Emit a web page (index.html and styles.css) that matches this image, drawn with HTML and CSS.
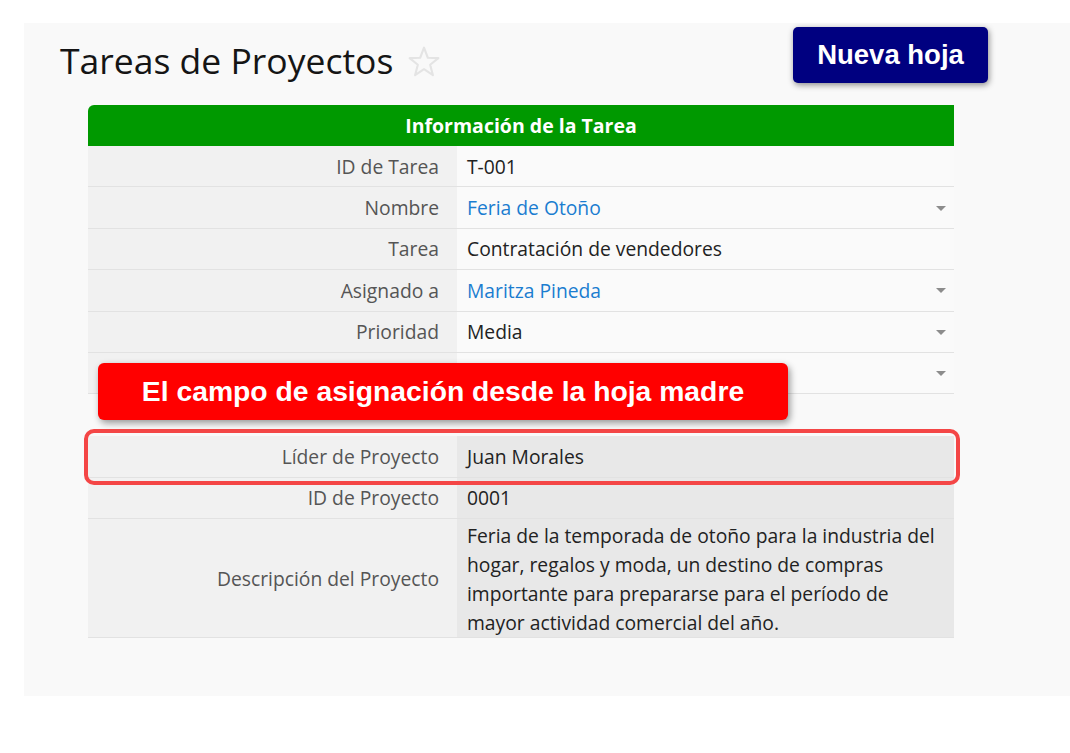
FILE: index.html
```html
<!DOCTYPE html>
<html lang="es">
<head>
  <meta charset="UTF-8">
  <title>Tareas de Proyectos</title>
  <link rel="stylesheet" href="styles.css">
</head>
<body>

<div class="panel">
  <div class="topbar">
    <h1 class="title">Tareas de Proyectos</h1>
    <svg class="star" width="34" height="34" viewBox="0 0 32 32">
      <polygon points="16,2.5 19.6,12 29.5,12.4 21.8,18.6 24.4,28.4 16,22.8 7.6,28.4 10.2,18.6 2.5,12.4 12.4,12" fill="none" stroke="#e4e4e4" stroke-width="2" stroke-linejoin="round"/>
    </svg>
    <button class="new-sheet">Nueva hoja</button>
  </div>

  <div class="form">
    <div class="form-head">Información de la Tarea</div>

    <div class="row">
      <div class="label">ID de Tarea</div>
      <div class="value">T-001</div>
    </div>
    <div class="row">
      <div class="label">Nombre</div>
      <div class="value"><a class="link">Feria de Otoño</a><span class="caret"></span></div>
    </div>
    <div class="row">
      <div class="label">Tarea</div>
      <div class="value">Contratación de vendedores</div>
    </div>
    <div class="row">
      <div class="label">Asignado a</div>
      <div class="value"><a class="link">Maritza Pineda</a><span class="caret"></span></div>
    </div>
    <div class="row">
      <div class="label">Prioridad</div>
      <div class="value">Media<span class="caret"></span></div>
    </div>
    <div class="row">
      <div class="label"></div>
      <div class="value"><span class="caret"></span></div>
    </div>

    <div class="spacer"></div>

    <div class="row readonly">
      <div class="label">Líder de Proyecto</div>
      <div class="value">Juan Morales</div>
      <div class="highlight"></div>
    </div>
    <div class="row readonly">
      <div class="label">ID de Proyecto</div>
      <div class="value">0001</div>
    </div>
    <div class="row readonly tall">
      <div class="label">Descripción del Proyecto</div>
      <div class="value text">Feria de la temporada de otoño para la industria del hogar, regalos y moda, un destino de compras importante para prepararse para el período de mayor actividad comercial del año.</div>
    </div>

    <div class="callout">El campo de asignación desde la hoja madre</div>
  </div>
</div>

</body>
</html>
```

FILE: styles.css
```css
body {
  margin: 0;
  background: #fff;
  font-family: "Open Sans", Arial, sans-serif;
}

.panel {
  margin: 23px 0 0 24px;
  height: 673px;
  background: #f9f9f9;
}

.topbar {
  display: flex;
  align-items: flex-start;
  padding: 4px 0 0 36px;
}

.title {
  margin: 9px 0 0;
  font-size: 35.5px;
  font-weight: normal;
  color: #151515;
  line-height: 48px;
}

.star {
  margin: 18px 0 0 14px;
}

.new-sheet {
  margin-left: auto;
  margin-right: 82px;
  width: 195px;
  height: 56px;
  background: #000080;
  color: #fff;
  border: none;
  border-radius: 5px;
  font-family: "Liberation Sans", Arial, sans-serif;
  font-size: 27.5px;
  font-weight: bold;
  box-shadow: 1px 2px 6px rgba(0, 0, 0, 0.45);
}

.form {
  position: relative;
  width: 866px;
  margin: 21px 0 0 64px;
  font-size: 19.3px;
}

.form-head {
  height: 41px;
  line-height: 41px;
  background: #009900;
  color: #fff;
  font-size: 19.5px;
  font-weight: bold;
  text-align: center;
  border-top-left-radius: 6px;
}

.row {
  position: relative;
  display: flex;
  height: 40.4px;
  border-bottom: 1px solid #e2e2e2;
}

.label {
  width: 351px;
  padding-right: 18px;
  background: #f1f1f1;
  color: #555;
  text-align: right;
  display: flex;
  align-items: center;
  justify-content: flex-end;
}

.value {
  flex: 1;
  position: relative;
  padding: 0 12px 0 10px;
  background: #fafafa;
  color: #222;
  display: flex;
  align-items: center;
}

.link {
  color: #1b7dd0;
}

.caret {
  position: absolute;
  right: 8px;
  top: 50%;
  margin-top: -2px;
  border-left: 5px solid transparent;
  border-right: 5px solid transparent;
  border-top: 5px solid #8c8c8c;
}

.spacer {
  height: 42px;
}

.readonly .value {
  background: #e8e8e8;
}

.tall {
  height: 118px;
}

.value.text {
  display: block;
  padding-top: 2px;
  line-height: 29px;
}

.highlight {
  position: absolute;
  z-index: 2;
  top: -7px;
  left: -4px;
  right: -6px;
  bottom: -8px;
  border: 4px solid #f44646;
  border-radius: 10px;
}

.callout {
  position: absolute;
  z-index: 3;
  left: 10px;
  top: 258px;
  width: 690px;
  height: 57px;
  line-height: 57px;
  background: #ff0000;
  color: #fff;
  border-radius: 6px;
  text-align: center;
  font-family: "Liberation Sans", Arial, sans-serif;
  font-size: 28.3px;
  font-weight: bold;
  box-shadow: 2px 3px 7px rgba(0, 0, 0, 0.4);
}
```
